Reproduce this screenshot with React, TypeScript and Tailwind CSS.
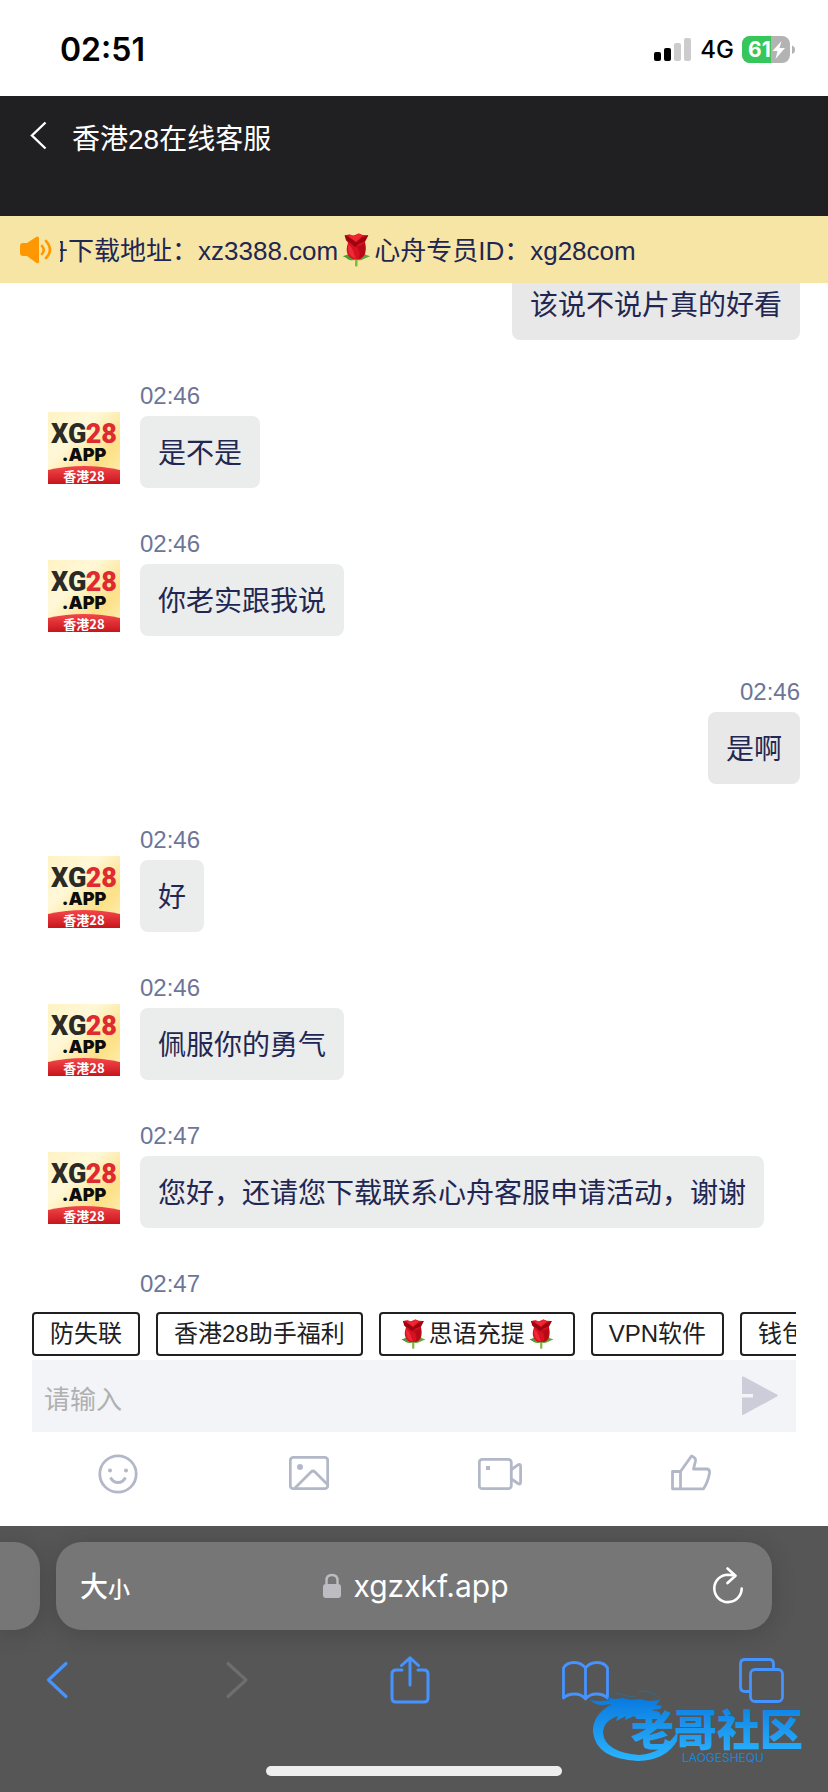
import React from "react";

type IconProps = { className?: string };

type Message = {
  id: number;
  from: "agent" | "me";
  time: string;
  text: string;
};

const messages: Message[] = [
  { id: 1, from: "me", time: "02:46", text: "该说不说片真的好看" },
  { id: 2, from: "agent", time: "02:46", text: "是不是" },
  { id: 3, from: "agent", time: "02:46", text: "你老实跟我说" },
  { id: 4, from: "me", time: "02:46", text: "是啊" },
  { id: 5, from: "agent", time: "02:46", text: "好" },
  { id: 6, from: "agent", time: "02:46", text: "佩服你的勇气" },
  { id: 7, from: "agent", time: "02:47", text: "您好，还请您下载联系心舟客服申请活动，谢谢" },
  { id: 8, from: "agent", time: "02:47", text: "谢谢" },
];

function Rose({ className }: IconProps) {
  return (
    <svg viewBox="0 0 34 36" className={className} role="img" aria-label="🌹">
      <path d="M16 24h2.600v11q-1.300 1.200-2.600 0z" fill="#7fb83e" />
      <path d="M3 24.500q6-1 7-5 3 7 7 8-3 2.500-8 .500-3-2.500-6-3.500z" fill="#4f9a35" />
      <path d="M32 24.500q-6-1-7-5-3 7-8 8.500 4 2 8-.500 4-2 7-3z" fill="#5da83d" />
      <path d="M5 2.500l5-1 4 1.500 6-2.500 4 1.500 6 .500-3.500 7q2 8-.500 14-3 4.500-9 4.500-6.500 0-9-6Q6 17 8.500 10.500z" fill="#d9101f" />
      <path d="M5 2.500l6 2.500 6 5 6-5 7-2.500-4 6.500-6 2.500-4 3.500-4-4-5.500-3z" fill="#9c0510" />
      <path d="M10 1.500l5 1.500 5-2.500 4 2.500-7 6-7-4.500z" fill="#ef2632" />
      <path d="M18 14q5 0 8-4 2 8-.500 13.500-2 3.500-6 4.500 3.500-7-1.500-14z" fill="#b70a17" />
      <path d="M9 12q4 3 5 7t3 8q-5-1-7-5-2.500-5-1-10z" fill="#ee2a36" />
    </svg>
  );
}

function Avatar() {
  return (
    <svg viewBox="0 0 72 72" className="mt-8 size-[72px] shrink-0" role="img" aria-label="XG28.APP 香港28">
      <defs>
        <linearGradient id="gold" x1="0" y1="0" x2="1" y2="1">
          <stop offset="0" stopColor="#fff3c4" />
          <stop offset="0.35" stopColor="#fff8d8" />
          <stop offset="0.7" stopColor="#fde187" />
          <stop offset="1" stopColor="#fff0b8" />
        </linearGradient>
        <linearGradient id="ruby" x1="0" y1="0" x2="0" y2="1">
          <stop offset="0" stopColor="#f4474b" />
          <stop offset="1" stopColor="#c8151c" />
        </linearGradient>
      </defs>
      <rect width="72" height="72" fill="url(#gold)" />
      <path d="M0 58Q18 54 36 54t36 4v14H0z" fill="url(#ruby)" />
      <g fontFamily="Roboto, sans-serif" fontWeight="900" fontSize="27">
        <text x="3" y="31" fill="#2b2b25">XG</text>
        <text x="69" y="31" textAnchor="end" fill="#df2a30">28</text>
      </g>
      <text x="36" y="49" textAnchor="middle" fontFamily="Inter, sans-serif" fontWeight="900" fontSize="18" fill="#0d0d0d">
        .APP
      </text>
      <text x="36" y="69" textAnchor="middle" fontFamily="'Noto Sans CJK SC', sans-serif" fontWeight="700" fontSize="13" fill="#ffffff">
        香港28
      </text>
    </svg>
  );
}

function StatusBar() {
  return (
    <div className="flex h-24 shrink-0 items-center justify-between bg-white pt-1 pr-8 pl-[60px] font-[Inter,sans-serif] text-black">
      <span className="text-[32px] leading-none font-semibold">02:51</span>
      <div className="flex items-center gap-2">
        <svg viewBox="0 0 38 24" className="h-6 w-[38px]" aria-hidden="true">
          <rect x="0" y="14" width="7" height="9" rx="2" />
          <rect x="10" y="10" width="7" height="13" rx="2" />
          <rect x="20" y="5" width="7" height="18" rx="2" fill="#cccccc" />
          <rect x="30" y="0" width="7" height="23" rx="2" fill="#cccccc" />
        </svg>
        <span className="text-[24px] leading-none font-medium">4G</span>
        <svg viewBox="0 0 54 28" className="h-7 w-[54px]" role="img" aria-label="61%">
          <defs>
            <clipPath id="cell">
              <rect width="48" height="27" rx="8" />
            </clipPath>
          </defs>
          <g clipPath="url(#cell)">
            <rect width="48" height="27" fill="#b3b3b3" />
            <rect width="29" height="27" fill="#35c759" />
          </g>
          <path d="M50 9.500q3 1 3 4.200t-3 4.200z" fill="#b3b3b3" />
          <text x="6" y="21" fontFamily="Inter, sans-serif" fontWeight="700" fontSize="21" fill="#fff">61</text>
          <path d="M39.500 5L30.500 15h5L33.500 23l9.500-11h-5.500z" fill="#fff" />
        </svg>
      </div>
    </div>
  );
}

function Notice() {
  return (
    <div className="flex h-[67px] shrink-0 items-center bg-[#f6e5a5] pl-5 text-[26px] text-[#1f2752]">
      <svg viewBox="0 0 32 28" className="h-7 w-8 shrink-0" aria-hidden="true">
        <path d="M3 7h4L16.500.700Q19 0 19 2.500v23q0 2.500-2.500 1.500L7 20H3q-3 0-3-3v-7q0-3 3-3z" fill="#ff9800" />
        <path d="M22 10q3.500 4 0 8M26 5q8 9 0 17" fill="none" stroke="#ff9800" strokeWidth="2.600" strokeLinecap="round" />
      </svg>
      <div className="ml-2 flex-1 overflow-hidden pt-1">
        <p className="-ml-[18px] flex items-center whitespace-nowrap">
          <span>舟下载地址：xz3388.com</span>
          <Rose className="mb-1 h-[34px] w-9 shrink-0" />
          <span>心舟专员ID：xg28com</span>
        </p>
      </div>
    </div>
  );
}

function MessageRow({ message }: { message: Message }) {
  const mine = message.from === "me";
  return (
    <li className={mine ? "flex justify-end" : "flex gap-5"}>
      {!mine && <Avatar />}
      <div className={mine ? "flex flex-col items-end gap-1" : "flex flex-col items-start gap-1"}>
        <time className="text-[24px] leading-8 text-[#6d7598]">{message.time}</time>
        <p
          className={
            mine
              ? "rounded-lg bg-[#e8e8e8] px-[18px] pt-[18px] pb-[14px] text-[28px] leading-10"
              : "rounded-lg bg-[#ebecec] px-[18px] pt-[18px] pb-[14px] text-[28px] leading-10"
          }
        >
          {message.text}
        </p>
      </div>
    </li>
  );
}

const quickClass =
  "flex h-11 shrink-0 items-center rounded-[4px] border-2 border-[#202022] bg-white px-4 text-[24px] leading-none whitespace-nowrap text-[#202022]";

const toolClass = "flex h-[84px] flex-1 items-center justify-center text-[#b3b8c8]";

function Composer() {
  return (
    <footer className="shrink-0 bg-white pt-3">
      <div className="mx-8 flex gap-4 overflow-hidden">
        <button className={quickClass}>防失联</button>
        <button className={quickClass}>香港28助手福利</button>
        <button className={quickClass}>
          <Rose className="h-[30px] w-8" />
          思语充提
          <Rose className="h-[30px] w-8" />
        </button>
        <button className={quickClass}>VPN软件</button>
        <button className={quickClass}>钱包下载</button>
      </div>
      <form className="mx-8 mt-1 flex h-[72px] items-center bg-[#f3f4f8] pr-[18px] pl-3" onSubmit={(e) => e.preventDefault()}>
        <input
          type="text"
          aria-label="请输入"
          placeholder="请输入"
          className="h-full min-w-0 flex-1 bg-transparent pt-2 text-[26px] outline-none placeholder:text-[#b0b0b0]"
        />
        <button type="submit" aria-label="发送">
          <svg viewBox="0 0 36 40" className="h-10 w-9">
            <path d="M0 1.500Q0 0 1.500.600L35 18.500q1.500 1 0 2L1.500 38.800Q0 39.500 0 38V21.500h11v-3.500H0z" fill="#cdccd9" />
          </svg>
        </button>
      </form>
      <div className="flex h-[94px] items-start pr-[42px] pl-[22px]">
        <button className={toolClass} aria-label="表情">
          <svg viewBox="0 0 40 40" className="size-10" fill="none" stroke="currentColor" strokeWidth="2.800">
            <circle cx="20" cy="20" r="18.200" />
            <circle cx="12" cy="16.500" r="2" fill="currentColor" stroke="none" />
            <circle cx="28" cy="16.500" r="2" fill="currentColor" stroke="none" />
            <path d="M12.500 23.500q2.500 5 7.500 5t7.500-5" />
          </svg>
        </button>
        <button className={toolClass} aria-label="图片">
          <svg viewBox="0 0 40 40" className="size-10" fill="none" stroke="currentColor" strokeWidth="2.800">
            <rect x="1.300" y="3.300" width="37.400" height="31.400" rx="3" />
            <circle cx="11" cy="13" r="3" fill="currentColor" stroke="none" />
            <path d="M6 34L22 18q2-2 4 0l13 13" />
          </svg>
        </button>
        <button className={toolClass} aria-label="视频">
          <svg viewBox="0 0 44 40" className="h-10 w-11" fill="none" stroke="currentColor" strokeWidth="2.800" strokeLinejoin="round">
            <rect x="1.300" y="5.300" width="32" height="29.400" rx="3" />
            <rect x="8" y="12" width="4" height="4" fill="currentColor" stroke="none" />
            <path d="M33.500 15.500l6.500-4.700q2.600-1.300 2.600 1.500v16q0 2.600-2.600 1.200l-6.500-4.500" />
          </svg>
        </button>
        <button className={toolClass} aria-label="点赞">
          <svg viewBox="0 0 40 40" className="size-10" fill="none" stroke="currentColor" strokeWidth="2.800" strokeLinejoin="round">
            <path d="M1.500 17.500h8v17.300h-8zM9.500 17.500L20.500 2q4.500 1.500 4 5l-2 8h13.500q3 .500 2.500 4-1.500 9-6 15.800h-23" />
          </svg>
        </button>
      </div>
    </footer>
  );
}

function BrowserBar() {
  return (
    <div className="relative h-[266px] shrink-0 bg-[#565656] pt-4">
      <div className="flex gap-4 pr-14">
        <div className="h-[88px] w-10 rounded-r-[26px] bg-[#767676] shadow-[0_4px_24px_rgba(0,0,0,0.16)]" />
        <div className="grid h-[88px] flex-1 grid-cols-[1fr_auto_1fr] items-center rounded-[26px] bg-[#767676] pr-5 pl-6 text-white shadow-[0_4px_24px_rgba(0,0,0,0.16)]">
          <button className="flex items-baseline justify-self-start pt-1 leading-none font-medium" aria-label="大小">
            <span className="text-[28px]">大</span>
            <span className="text-[22px]">小</span>
          </button>
          <button className="flex items-center gap-3">
            <svg viewBox="0 0 18 26" className="h-[26px] w-[18px]" aria-hidden="true">
              <path d="M3.500 12V7.500Q3.500 2 9 2t5.500 5.500V12" fill="none" stroke="#bdbcc3" strokeWidth="2.400" />
              <rect x="0" y="11" width="18" height="14" rx="3" fill="#bdbcc3" />
            </svg>
            <span className="font-[Inter,sans-serif] text-[30px] leading-10">xgzxkf.app</span>
          </button>
          <button className="mr-2 justify-self-end" aria-label="重新载入">
            <svg viewBox="0 0 32 38" className="h-[38px] w-8" fill="none" stroke="#fff" strokeWidth="2.600" strokeLinecap="round" strokeLinejoin="round">
              <path d="M29.700 21.500A13.700 13.700 0 1 1 16 7.700L23 8.500M15.500 1.500L23.500 8.700 15.500 16" />
            </svg>
          </button>
        </div>
      </div>
      <nav className="mt-[26px] flex h-12 items-center justify-between pr-[43px] pl-[33px] text-[#4593ff]">
        <button aria-label="后退">
          <svg viewBox="0 0 48 48" className="size-12" fill="none" stroke="currentColor" strokeWidth="3.200" strokeLinecap="round" strokeLinejoin="round">
            <path d="M33 7.500L15.500 24 33 40.500" />
          </svg>
        </button>
        <button aria-label="前进" className="text-[#6e6e6e]">
          <svg viewBox="0 0 48 48" className="size-12" fill="none" stroke="currentColor" strokeWidth="3.200" strokeLinecap="round" strokeLinejoin="round">
            <path d="M19 7.500L37 24 19 40.500" />
          </svg>
        </button>
        <button aria-label="分享">
          <svg viewBox="0 0 48 48" className="size-12" fill="none" stroke="currentColor" strokeWidth="3" strokeLinecap="round" strokeLinejoin="round">
            <path d="M17 14h-6q-4 0-4 4v24q0 4 4 4h28q4 0 4-4V18q0-4-4-4h-6M25 29V1.800M16.500 9.500L25 1.800l8.500 7.700" />
          </svg>
        </button>
        <button aria-label="书签">
          <svg viewBox="0 0 48 48" className="size-12" fill="none" stroke="currentColor" strokeWidth="2.800" strokeLinejoin="round">
            <path d="M24.500 43V12Q20.500 6.500 13 6.500T2.500 12v30q4-4 11-4t11 5q4-5 11-5t11 4V12q-3-5.500-10.500-5.500T24.500 12" />
          </svg>
        </button>
        <button aria-label="标签页">
          <svg viewBox="0 0 48 48" className="size-12" fill="none" stroke="currentColor" strokeWidth="2.800">
            <rect x="13.500" y="13.500" width="32" height="32" rx="4.500" />
            <path d="M13.500 35.500H8q-4.500 0-4.500-4.500V8q0-4.500 4.500-4.500h24q4.500 0 4.500 4.500v5.500" />
          </svg>
        </button>
      </nav>
      <div className="mx-auto mt-[62px] h-[10px] w-[296px] rounded-full bg-[#eeeeee]" />
      <Watermark />
    </div>
  );
}

function Watermark() {
  return (
    <div className="absolute right-3 bottom-6 h-[84px] w-[228px]">
      <svg viewBox="0 0 228 84" className="h-full w-full" role="img" aria-label="老哥社区 LAOGESHEQU">
        <defs>
          <linearGradient id="sea" x1="0" y1="0" x2="0" y2="1">
            <stop offset="0" stopColor="#0879df" />
            <stop offset="1" stopColor="#2bb4ff" />
          </linearGradient>
        </defs>
        <path
          d="M2 16q10 2 20 0l-3-3 8 2 8-1 8 2 9-1 9 2 11-1-4 5 6 1-2 3-9 1 9 2-6 5-10-3-8 4-2-2-9 4 1-4-10 5 2-5Q15 37 15 49q2 19 36 22 25-2 39-24l-1 10Q78 76 50 77 8 75 5 48 4 31 24 20l-9 1q-9 0-13-5z"
          fill="url(#sea)"
        />
        <path d="M28 9q10 4 20 4M50 7q16-1 23 9" fill="none" stroke="#356a8c" strokeWidth="1" />
        <text x="43" y="62" fontFamily="'Noto Sans CJK SC', sans-serif" fontWeight="900" fontSize="43" fill="url(#sea)">
          老哥社区
        </text>
        <text x="94" y="78" fontFamily="Inter, sans-serif" fontWeight="400" fontSize="12" fill="#1787dc">
          LAOGESHEQU
        </text>
      </svg>
    </div>
  );
}

export default function App() {
  return (
    <div className="flex h-screen flex-col overflow-hidden bg-white font-['Liberation_Sans','Noto_Sans_CJK_SC',sans-serif] text-[#1f2752]">
      <StatusBar />
      <header className="flex h-[120px] shrink-0 items-start bg-[#202022] pt-[18px] pl-[30px] text-white">
        <button aria-label="返回" className="flex h-11 items-center">
          <svg viewBox="0 0 18 30" className="h-[30px] w-[18px]" fill="none" stroke="currentColor" strokeWidth="2.400">
            <path d="M15.500 1.500L2 14.500l13.500 13" />
          </svg>
        </button>
        <h1 className="ml-6 pt-1 text-[28px] leading-[44px]">香港28在线客服</h1>
      </header>
      <Notice />
      <main className="min-h-0 flex-1 overflow-hidden">
        <ul className="-mt-[51px] flex flex-col gap-10 pr-7 pl-12">
          {messages.map((message) => (
            <MessageRow key={message.id} message={message} />
          ))}
        </ul>
      </main>
      <Composer />
      <BrowserBar />
    </div>
  );
}
